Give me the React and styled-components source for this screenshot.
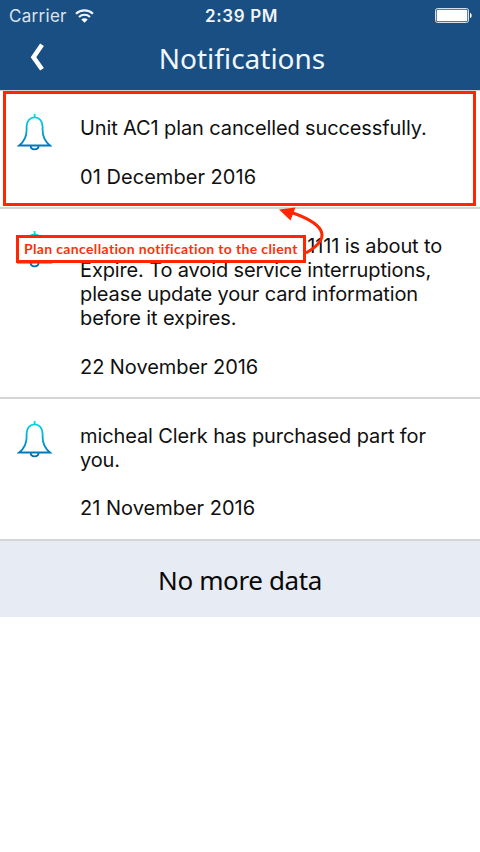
import React from 'react';
import styled, { createGlobalStyle } from 'styled-components';

const GlobalStyle = createGlobalStyle`
  * { box-sizing: border-box; }
  body { margin: 0; background: #fff; }
`;

const Screen = styled.div`
  position: relative;
  width: 480px;
  height: 852px;
  overflow: hidden;
  background: #fff;
  color: #101010;
  font-family: Inter, 'Liberation Sans', sans-serif;
`;

const Header = styled.header`
  height: 90px;
  background: #194f83;
  color: #fff;
`;

const StatusBar = styled.div`
  display: grid;
  grid-template-columns: 1fr auto 1fr;
  align-items: center;
  height: 31px;
  padding: 0 8px 0 9px;
`;

const Carrier = styled.div`
  display: flex;
  align-items: center;
  gap: 8px;
  font-size: 17px;
  line-height: 30px;
  letter-spacing: 0.3px;
  color: #dce5ed;
`;

const CarrierName = styled.span`
  padding-top: 1px;
`;

const Clock = styled.div`
  padding: 1px 0 0 2px;
  font-size: 17px;
  font-weight: 600;
  line-height: 30px;
  letter-spacing: 0.65px;
  color: #f1f5f8;
`;

const BatterySlot = styled.div`
  display: flex;
  justify-content: flex-end;
`;

const NavBar = styled.div`
  display: grid;
  grid-template-columns: 76px 1fr 72px;
  align-items: center;
  height: 55px;
`;

const BackButton = styled.button`
  display: flex;
  justify-content: center;
  padding: 0 2px 0 0;
  margin-top: -4px;
  border: 0;
  background: none;
`;

const Title = styled.h1`
  margin: 0;
  text-align: center;
  font: 400 28px/55px 'Noto Sans', sans-serif;
  color: #f2f6f9;
`;

const List = styled.ul`
  list-style: none;
  margin: 0;
  padding: 0;
  border-top: 1px solid #d2d2d4;
`;

const Row = styled.li`
  display: flex;
  height: ${(p) => p.$height}px;
  padding: 22px 0 0 17px;
  border-bottom: 2px solid #d5d5d6;
`;

const IconCell = styled.div`
  flex: 0 0 63px;
  padding-top: ${(p) => p.$offset}px;
`;

const Copy = styled.div`
  padding-top: ${(p) => p.$offset}px;
  font-size: 20px;
  line-height: 24.25px;
`;

const Line = styled.div`
  white-space: pre;
  letter-spacing: ${(p) => p.$spacing || 0}px;
`;

const DateLine = styled(Line)`
  margin-top: 24.25px;
`;

const Footer = styled.div`
  display: flex;
  align-items: center;
  justify-content: center;
  height: 76px;
  padding: 1px 0 0;
  background: #e7ebf3;
  color: #080808;
  font: 400 26px/36px 'Noto Sans', sans-serif;
  letter-spacing: -0.38px;
`;

const Highlight = styled.div`
  position: absolute;
  left: 3px;
  top: 91px;
  width: 473px;
  height: 115px;
  border: 3px solid #ff2600;
`;

const Annotation = styled.div`
  position: absolute;
  left: 16px;
  top: 235px;
  width: 290px;
  height: 28px;
  padding-left: 5px;
  border: 3px solid #ff2600;
  background: #fff;
  color: #ff2f0d;
  font: 700 14px/21px Lato, sans-serif;
  letter-spacing: 0.35px;
  white-space: nowrap;
`;

const Arrow = styled.svg`
  position: absolute;
  left: 270px;
  top: 200px;
`;

const WifiIcon = () => (
  <svg width="19" height="14" viewBox="0 0 19 14" fill="none">
    <path d="M1 4.7C5.7.3 13.3.3 18 4.7" stroke="#f3f6f9" strokeWidth="2.1" />
    <path d="M4 7.9c3-2.8 8-2.8 11 0" stroke="#f3f6f9" strokeWidth="2.1" />
    <path d="M6.3 10.5c1.8-1.6 4.6-1.6 6.4 0L9.5 13.7z" fill="#fff" />
  </svg>
);

const BatteryIcon = () => (
  <svg width="37" height="15" viewBox="0 0 37 15">
    <rect x=".5" y=".5" width="33" height="14" rx="2" fill="none" stroke="#d7e1ea" />
    <rect x="1.7" y="1.7" width="30.6" height="11.6" rx="1" fill="#fff" />
    <path d="M35 5c2.2.3 2.2 4.7 0 5z" fill="#fff" />
  </svg>
);

const BackIcon = () => (
  <svg width="16" height="28" viewBox="0 0 16 28" fill="none">
    <path d="M13 1.7 4.5 14.2 13 26.3" stroke="#fff" strokeWidth="4.6" />
  </svg>
);

const BellIcon = ({ id }) => (
  <svg width="36" height="38" viewBox="0 0 36 38" fill="none">
    <defs>
      <linearGradient id={id} x1="0" y1="0" x2="0" y2="37" gradientUnits="userSpaceOnUse">
        <stop offset="0" stopColor="#00dfe8" />
        <stop offset="1" stopColor="#0068b3" />
      </linearGradient>
    </defs>
    <g stroke={`url(#${id})`} strokeWidth="1.8">
      <path d="M2.2 31.500C7.200 27.500 9.600 22.500 9.600 16v-3.500c0-5.600 3.500-9.100 8-9.100s8 3.500 8 9.100V16c0 6.500 2.400 11.500 7.400 15.500z" />
      <path d="M17.600 0v3.400" />
      <path d="M13.600 31.500c0 5.200 8 5.200 8 0" />
    </g>
  </svg>
);

const notifications = [
  {
    id: 'cancelled',
    height: 118,
    offset: 3,
    iconOffset: 1,
    lines: [['Unit AC1 plan cancelled successfully.', -0.12]],
    date: '01 December 2016',
    dateSpacing: 0.04,
  },
  {
    id: 'expiring',
    height: 190,
    offset: 2.5,
    iconOffset: 0,
    lines: [
      ['Your Card *************1111 is about to', -0.13],
      ['Expire. To avoid service interruptions,', -0.13],
      ['please update your card information', -0.12],
      ['before it expires.', -0.12],
    ],
    date: '22 November 2016',
    dateSpacing: -0.06,
  },
  {
    id: 'purchased',
    height: 142,
    offset: 2.5,
    iconOffset: 0,
    lines: [
      ['micheal Clerk has purchased part for', -0.11],
      ['you.', -0.11],
    ],
    date: '21 November 2016',
    dateSpacing: 0,
  },
];

export default function App() {
  return (
    <>
      <GlobalStyle />
      <Screen>
        <Header>
          <StatusBar>
            <Carrier>
              <CarrierName>Carrier</CarrierName>
              <WifiIcon />
            </Carrier>
            <Clock>2:39 PM</Clock>
            <BatterySlot>
              <BatteryIcon />
            </BatterySlot>
          </StatusBar>
          <NavBar>
            <BackButton aria-label="Back">
              <BackIcon />
            </BackButton>
            <Title>Notifications</Title>
          </NavBar>
        </Header>
        <List>
          {notifications.map((n) => (
            <Row key={n.id} $height={n.height}>
              <IconCell $offset={n.iconOffset}>
                <BellIcon id={n.id} />
              </IconCell>
              <Copy $offset={n.offset}>
                {n.lines.map(([text, spacing]) => (
                  <Line key={text} $spacing={spacing}>
                    {text}
                  </Line>
                ))}
                <DateLine $spacing={n.dateSpacing}>{n.date}</DateLine>
              </Copy>
            </Row>
          ))}
        </List>
        <Footer>No more data</Footer>
        <Highlight />
        <Arrow width="60" height="64" viewBox="0 0 60 64">
          <path d="M36 53C66 36 50 22 20 12" fill="none" stroke="#ff2600" strokeWidth="3" />
          <path d="M9 9.5 25.5 7.5 20.5 20.5z" fill="#ff2600" />
        </Arrow>
        <Annotation>Plan cancellation notification to the client</Annotation>
      </Screen>
    </>
  );
}
